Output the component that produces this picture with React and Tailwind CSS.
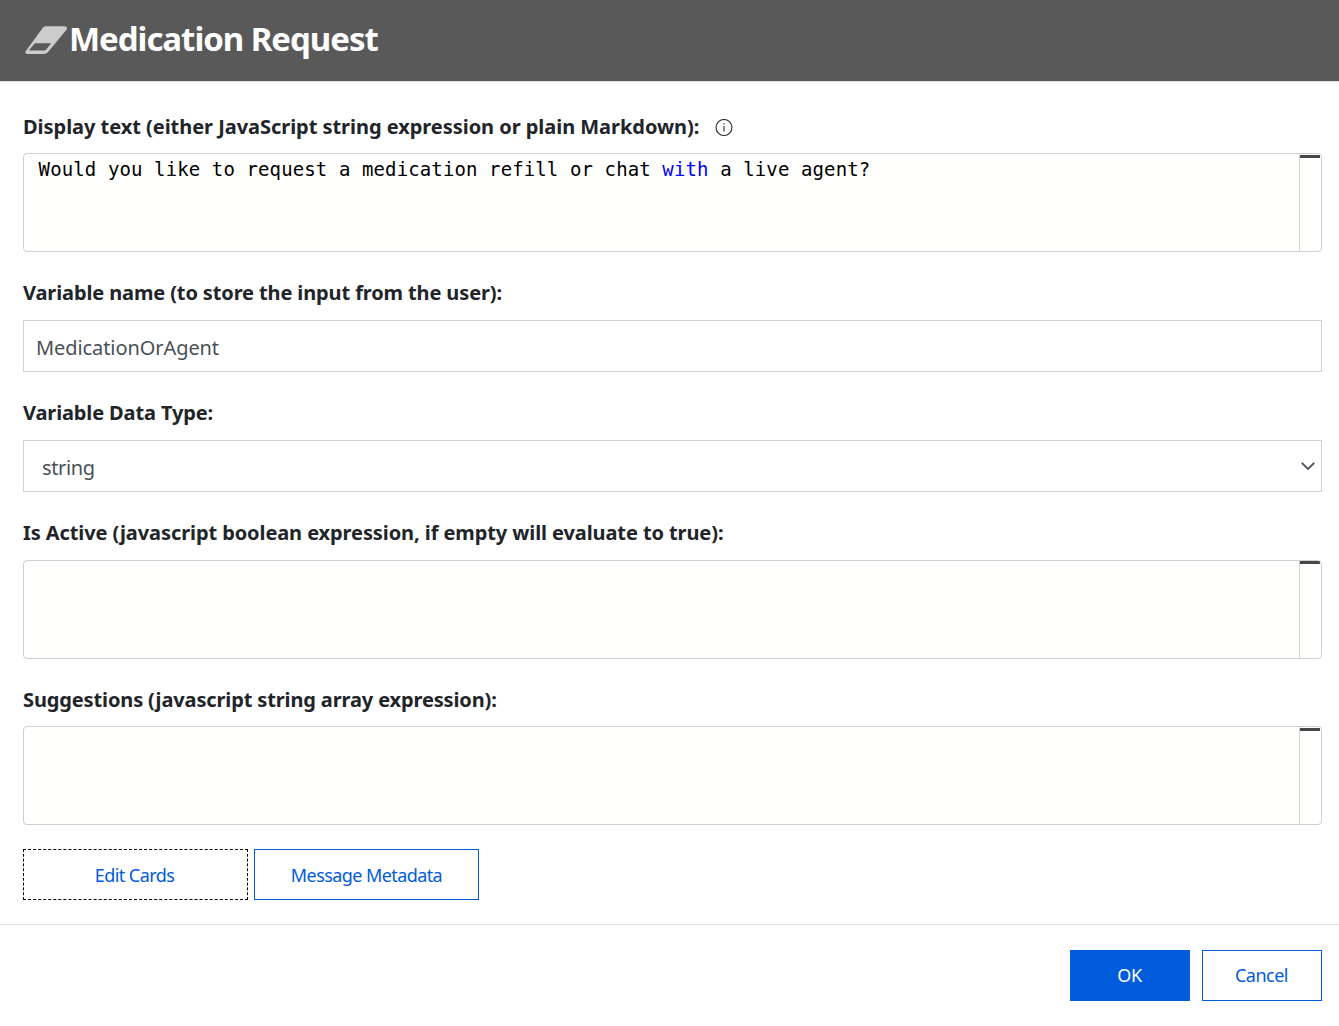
function EraserIcon() {
  return (
    <svg className="block h-[29px] w-[43px] shrink-0" viewBox="0 0 43 29">
      <path
        fillRule="evenodd"
        fill="#cccccc"
        d="M18 1.500C19.200.5 20.200.2 21.500.2H39.500c2.400 0 3.200 2 1.700 3.900L23.500 25.600c-1.500 1.800-2.900 2.400-4.800 2.400H2.400C.3 28-.3 26.200 1.200 24.400ZM10 17.300 4.500 23.500c-.6.7-.4 1.100.4 1.100h14.200c.7 0 1.200-.2 1.700-.7l5.400-6.600Z"
      />
    </svg>
  );
}

function InfoIcon() {
  return (
    <svg className="block h-[18px] w-[18px]" viewBox="0 0 18 18" fill="none" stroke="#24292e">
      <circle cx="9" cy="8.500" r="8" strokeWidth="1.1" />
      <path d="M9 7V12.500" strokeWidth="1.100" />
      <path d="M9 4.300V5.600" strokeWidth="1.200" />
    </svg>
  );
}

function Label({ children, className }) {
  return (
    <div className="flex h-[28px] items-center text-[20px] leading-[28px] font-bold whitespace-nowrap text-[#212529]">
      <span className={className}>{children}</span>
    </div>
  );
}

function CodeEditor({ children, rulerClass }) {
  return (
    <div className="flex h-[99px] overflow-hidden rounded border border-[#ced0d2] bg-[#fffffe]">
      <pre className="flex-1 pt-[2px] pl-[14.6px] font-['DejaVu_Sans_Mono',monospace] text-[19px] leading-[26px] tracking-[0.112px] text-black">
        {children}
      </pre>
      <div className={`w-[22px] border-l border-[#d3d3d3] ${rulerClass}`}>
        <div className="h-[3px] w-[20px] bg-[#474747]" />
      </div>
    </div>
  );
}

export default function App() {
  return (
    <div className="flex h-[1026px] w-[1339px] flex-col bg-white font-['Noto_Sans',sans-serif]">
      <header className="flex h-[82px] items-start border-b border-[#dee2e6] bg-[#595959] pt-[26px] pl-[25px]">
        <EraserIcon />
        <h1 className="-mt-[11px] ml-px text-[33px] leading-[48px] font-bold tracking-[-1.04px] whitespace-nowrap text-white">
          Medication Request
        </h1>
      </header>

      <main className="flex h-[842px] flex-col pt-[31px] pr-[17px] pl-[23px]">
        <div className="flex items-center">
          <Label className="tracking-[-0.04px]">
            Display text (either JavaScript string expression or plain Markdown):
          </Label>
          <span className="ml-[16px] pt-px">
            <InfoIcon />
          </span>
        </div>
        <div className="mt-[12px]">
          <CodeEditor rulerClass="pt-px">
            Would you like to request a medication refill or chat <span className="text-[#0000ff]">with</span> a live agent?
          </CodeEditor>
        </div>

        <div className="mt-[27px]">
          <Label className="tracking-[-0.12px]">Variable name (to store the input from the user):</Label>
        </div>
        <div className="mt-[13px] flex h-[52px] items-center border border-[#ced4da] pt-[3px] pl-[12px] text-[20px] text-[#495057]">
          <span className="tracking-[-0.08px]">MedicationOrAgent</span>
        </div>

        <div className="mt-[27px]">
          <Label className="tracking-[-0.13px]">Variable Data Type:</Label>
        </div>
        <div className="mt-[13px] flex h-[52px] items-center justify-between border border-[#ced4da] pr-[6px] pl-[18px] text-[20px] text-[#495057]">
          <span className="pt-[3px] tracking-[-0.35px]">string</span>
          <svg className="h-[8px] w-[14px]" viewBox="0 0 14 8" fill="none" stroke="#495057" strokeWidth="1.8">
            <path d="M.8.8 7 7 13.200.8" />
          </svg>
        </div>

        <div className="mt-[27px]">
          <Label className="tracking-[-0.09px]">
            Is Active (javascript boolean expression, if empty will evaluate to true):
          </Label>
        </div>
        <div className="mt-[13px]">
          <CodeEditor rulerClass="pt-0" />
        </div>

        <div className="mt-[27px]">
          <Label className="tracking-[-0.13px]">Suggestions (javascript string array expression):</Label>
        </div>
        <div className="mt-[12px]">
          <CodeEditor rulerClass="pt-px" />
        </div>

        <div className="mt-[24px] flex gap-[6px] text-[18px] text-[#005cdb]">
          <button className="h-[51px] w-[225px] border border-dashed border-black pt-px pr-[2px]">
            <span className="tracking-[-0.55px]">Edit Cards</span>
          </button>
          <button className="h-[51px] w-[225px] border border-[#005cdb] pt-px">
            <span className="tracking-[-0.58px]">Message Metadata</span>
          </button>
        </div>
      </main>

      <footer className="flex h-[102px] justify-end gap-[12px] border-t border-[#dee2e6] pt-[25px] pr-[17px] text-[18px]">
        <button className="h-[51px] w-[120px] bg-[#005cdb] pr-px text-white">
          <span className="tracking-[-0.4px]">OK</span>
        </button>
        <button className="h-[51px] w-[120px] border border-[#005cdb] pr-px text-[#005cdb]">
          <span className="tracking-[-0.5px]">Cancel</span>
        </button>
      </footer>
    </div>
  );
}
